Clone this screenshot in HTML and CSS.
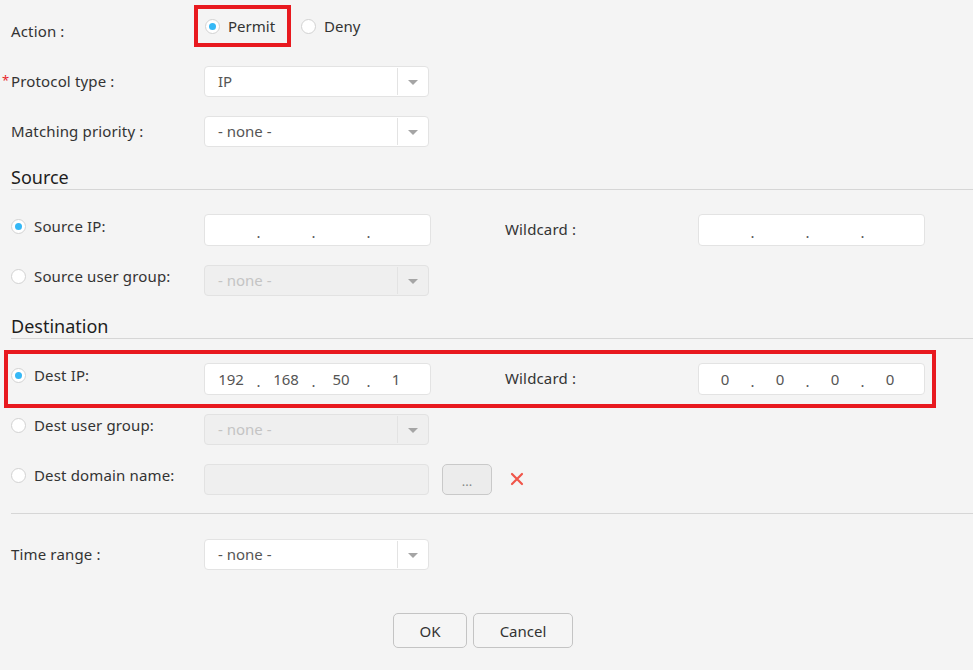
FILE: index.html
```html
<!DOCTYPE html>
<html lang="en">
<head>
    <meta charset="UTF-8">
    <title>ACL Rule</title>
    <link rel="stylesheet" href="styles.css">
</head>
<body>
    <div class="form">
        <div class="row">
            <div class="label">Action :</div>
            <div class="radios">
                <label class="opt mark"><span class="radio checked"></span>Permit</label>
                <label class="opt"><span class="radio"></span>Deny</label>
            </div>
        </div>
        <div class="row">
            <div class="label required"><span class="star">*</span>Protocol type :</div>
            <div class="select"><span class="value">IP</span><span class="arrow"></span></div>
        </div>
        <div class="row">
            <div class="label">Matching priority :</div>
            <div class="select"><span class="value">- none -</span><span class="arrow"></span></div>
        </div>

        <div class="section">Source</div>
        <div class="row">
            <label class="label opt up"><span class="radio checked"></span>Source IP:</label>
            <div class="ip">
                <span class="seg"></span><span class="dot">.</span>
                <span class="seg"></span><span class="dot">.</span>
                <span class="seg"></span><span class="dot">.</span>
                <span class="seg"></span>
            </div>
            <div class="label wild">Wildcard :</div>
            <div class="ip">
                <span class="seg"></span><span class="dot">.</span>
                <span class="seg"></span><span class="dot">.</span>
                <span class="seg"></span><span class="dot">.</span>
                <span class="seg"></span>
            </div>
        </div>
        <div class="row">
            <label class="label opt up"><span class="radio"></span>Source user group:</label>
            <div class="select disabled"><span class="value">- none -</span><span class="arrow"></span></div>
        </div>

        <div class="section">Destination</div>
        <div class="row marked">
            <label class="label opt up"><span class="radio checked"></span>Dest IP:</label>
            <div class="ip">
                <span class="seg">192</span><span class="dot">.</span>
                <span class="seg">168</span><span class="dot">.</span>
                <span class="seg">50</span><span class="dot">.</span>
                <span class="seg">1</span>
            </div>
            <div class="label wild">Wildcard :</div>
            <div class="ip">
                <span class="seg">0</span><span class="dot">.</span>
                <span class="seg">0</span><span class="dot">.</span>
                <span class="seg">0</span><span class="dot">.</span>
                <span class="seg">0</span>
            </div>
        </div>
        <div class="row">
            <label class="label opt up"><span class="radio"></span>Dest user group:</label>
            <div class="select disabled"><span class="value">- none -</span><span class="arrow"></span></div>
        </div>
        <div class="row">
            <label class="label opt up"><span class="radio"></span>Dest domain name:</label>
            <div class="text-input disabled"></div>
            <button class="more">...</button>
            <svg class="remove" width="14" height="14" viewBox="0 0 14 14">
                <path d="M2 2 L12 12 M12 2 L2 12" stroke="#f0564a" stroke-width="2.2" stroke-linecap="round"/>
            </svg>
        </div>

        <div class="divider"></div>
        <div class="row">
            <div class="label">Time range :</div>
            <div class="select"><span class="value">- none -</span><span class="arrow"></span></div>
        </div>

        <div class="buttons">
            <button class="btn ok">OK</button>
            <button class="btn">Cancel</button>
        </div>
    </div>
</body>
</html>
```

FILE: styles.css
```css
* {
    margin: 0;
    padding: 0;
    box-sizing: border-box;
}
body {
    background: #f4f4f4;
    font-family: "Noto Sans", Arial, sans-serif;
    font-size: 15px;
    color: #333;
}
.form {
    padding: 6px 0 0 11px;
}
.row {
    display: flex;
    align-items: center;
    height: 50px;
}
.label {
    width: 193px;
    flex-shrink: 0;
    letter-spacing: 0.15px;
}
.label.up {
    margin-bottom: 8px;
}
.label.wild {
    margin-left: 74px;
    margin-bottom: 2px;
}
.required {
    margin-left: -9px;
    width: 202px;
}
.star {
    display: inline-block;
    width: 9px;
    color: #e8262b;
    font-size: 13px;
    vertical-align: top;
}

/* radios */
.radios {
    display: flex;
    align-items: center;
    margin-bottom: 10px;
}
.opt {
    display: flex;
    align-items: center;
}
.radio {
    width: 15px;
    height: 15px;
    border: 1px solid #d2d2d2;
    border-radius: 50%;
    background: #fff;
    margin-right: 8px;
    position: relative;
    flex-shrink: 0;
}
.radio.checked::after {
    content: '';
    position: absolute;
    width: 7px;
    height: 7px;
    border-radius: 50%;
    background: #35b8f6;
    top: 3px;
    left: 3px;
}
.mark {
    margin-left: -10px;
    height: 42px;
    border: 4px solid #e8191f;
    padding: 0 12px 0 7px;
}
.radios .opt + .opt {
    margin-left: 10px;
}

/* select */
.select {
    display: flex;
    width: 225px;
    height: 31px;
    background: #fff;
    border: 1px solid #e3e3e3;
    border-radius: 4px;
}
.select .value {
    flex: 1;
    padding-left: 13px;
    line-height: 29px;
    color: #555;
}
.select .arrow {
    width: 31px;
    margin: 1px 0;
    border-left: 1px solid #e3e3e3;
    position: relative;
}
.select .arrow::after {
    content: '';
    position: absolute;
    left: 10px;
    top: 12px;
    border-left: 5px solid transparent;
    border-right: 5px solid transparent;
    border-top: 5px solid #a5a5a5;
}
.select.disabled,
.text-input.disabled {
    background: #efefef;
    border-color: #e2e2e2;
}
.select.disabled .value {
    color: #c4c4c4;
}
.text-input {
    width: 225px;
    height: 31px;
    border: 1px solid #e2e2e2;
    border-radius: 4px;
}

/* ip address */
.ip {
    display: flex;
    width: 227px;
    height: 32px;
    padding-left: 1px;
    background: #fff;
    border: 1px solid #e3e3e3;
    border-radius: 4px;
    color: #555;
    line-height: 30px;
}
.ip .seg {
    width: 50px;
    text-align: center;
}
.ip .dot {
    width: 5px;
    text-align: center;
    position: relative;
    top: 2px;
    color: #555;
}

.more {
    width: 50px;
    height: 31px;
    margin-left: 13px;
    background: #ececec;
    border: 1px solid #c9c9c9;
    border-radius: 5px;
    color: #888;
    font-family: inherit;
    font-size: 13px;
    padding-top: 4px;
}
.remove {
    margin-left: 18px;
}

/* sections */
.section {
    font-size: 18px;
    line-height: 24px;
    padding-top: 9px;
    color: #1e1e1e;
    border-bottom: 1px solid #d6d6d6;
    margin-bottom: 15px;
}
.marked {
    height: 58px;
    width: 932px;
    margin: -4px 0 -4px -7px;
    padding-left: 3px;
    border: 4px solid #e8191f;
}
.divider {
    margin-top: 9px;
    border-top: 1px solid #d6d6d6;
    margin-bottom: 15px;
}

/* buttons */
.buttons {
    display: flex;
    justify-content: center;
    gap: 6px;
    margin-top: 34px;
    padding-right: 18px;
}
.btn {
    height: 35px;
    width: 100px;
    background: #f5f5f5;
    border: 1px solid #c4c4c4;
    border-radius: 5px;
    color: #333;
    font-family: inherit;
    font-size: 15px;
}
.btn.ok {
    width: 74px;
}
```
